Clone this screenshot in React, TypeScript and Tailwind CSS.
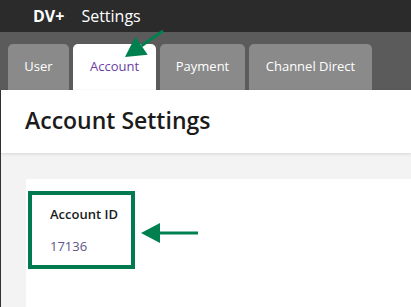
import React from "react";

const tabs = [
  { label: "User", w: "w-[61px]" },
  { label: "Account", w: "w-[83px]", active: true },
  { label: "Payment", w: "w-[85px]" },
  { label: "Channel Direct", w: "w-[123px]" },
];

function Arrow({ className, x1, y1, x2, y2, len, half }: { className: string; x1: number; y1: number; x2: number; y2: number; len: number; half: number }) {
  // simple line with a triangle head at (x2, y2)
  const ang = Math.atan2(y2 - y1, x2 - x1);
  const bx = x2 - Math.cos(ang) * len;
  const by = y2 - Math.sin(ang) * len;
  const px = -Math.sin(ang) * half;
  const py = Math.cos(ang) * half;
  return (
    <svg className={className} width="411" height="307" viewBox="0 0 411 307">
      <line x1={x1} y1={y1} x2={bx} y2={by} stroke="#00804f" strokeWidth="3" />
      <polygon points={`${x2},${y2} ${bx + px},${by + py} ${bx - px},${by - py}`} fill="#00804f" />
    </svg>
  );
}

export default function App() {
  return (
    <div className="relative w-[411px] h-[307px] overflow-hidden bg-[#f3f3f3] font-['Open_Sans',sans-serif]">
      <div className="h-8 bg-[#2b2b2b] flex items-center pl-[33px] text-white text-[16px]">
        <span className="font-bold">DV+</span>
        <span className="ml-[17px]">Settings</span>
      </div>
      <div className="h-[58px] bg-[#5b5b5b] flex items-end pl-2 gap-1">
        {tabs.map((t) => (
          <div
            key={t.label}
            className={
              (t.active ? "bg-white text-[#6a3ea1]" : "bg-[#8a8a8a] text-white") +
              " " + t.w + " h-[46px] rounded-t-[5px] flex items-center justify-center text-[13px]"
            }
          >
            {t.label}
          </div>
        ))}
      </div>
      <div className="border-l border-[#333] h-full">
        <div className="h-[63px] bg-white flex items-center pl-6 shadow-[0_1px_3px_rgba(0,0,0,0.12)] relative">
          <h1 className="text-[23px] font-semibold text-[#1b1b1b] pb-[2px]">Account Settings</h1>
        </div>
        <div className="pl-[25px] pt-[26px] h-full">
          <div className="bg-white h-full pl-[2px] pt-3">
            <div className="w-[107px] h-[78px] border-4 border-[#007a4e] pl-[18px] pt-[10px]">
              <div className="text-[13px] font-semibold text-[#1b1b1b]">Account ID</div>
              <div className="text-[13px] text-[#5d5689] mt-[12px]">17136</div>
            </div>
          </div>
        </div>
      </div>
      <Arrow className="absolute left-0 top-0 pointer-events-none" x1={163} y1={31} x2={125} y2={57} len={20} half={11} />
      <Arrow className="absolute left-0 top-0 pointer-events-none" x1={198} y1={233} x2={141} y2={233} len={19} half={10} />
    </div>
  );
}
